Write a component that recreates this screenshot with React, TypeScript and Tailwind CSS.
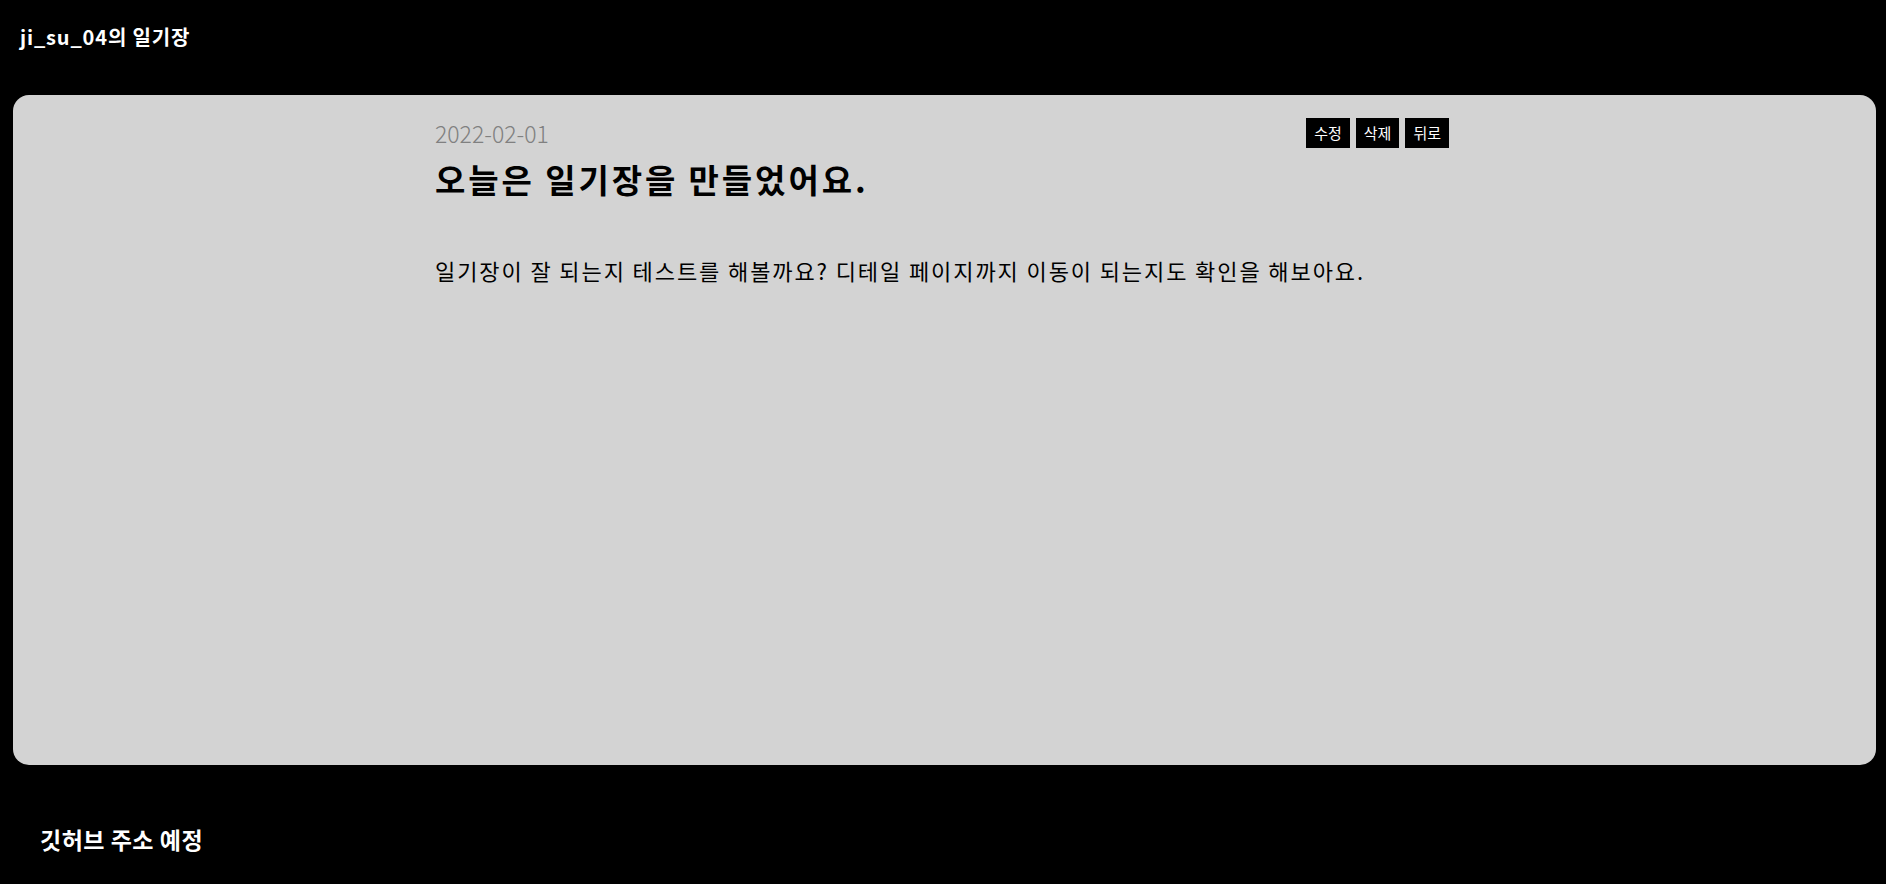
import React from "react";

export default function App() {
  const font = { fontFamily: '"Noto Sans CJK KR", "Noto Sans", sans-serif' };
  return (
    <div className="min-h-[884px] w-full bg-black text-white" style={font}>
      <header className="h-[95px] pl-[20px] pt-[22px]">
        <h1 className="text-[20px] font-bold leading-[30px] tracking-[0.85px]">ji_su_04의 일기장</h1>
      </header>
      <main className="ml-[13px] mr-[10px] h-[670px] rounded-[16px] bg-[#d3d3d3] pr-[5px] text-black">
        <div className="mx-auto w-[1014px] pt-[23px]">
          <div className="flex items-center justify-between">
            <span className="text-[23px] font-light leading-[30px] text-[#808080]">2022-02-01</span>
            <div className="flex gap-[6px]">
              <button className="h-[30px] bg-black px-[8px] text-[15px] leading-[30px] text-white">수정</button>
              <button className="h-[30px] bg-black px-[8px] text-[15px] leading-[30px] text-white">삭제</button>
              <button className="h-[30px] bg-black px-[8px] text-[15px] leading-[30px] text-white">뒤로</button>
            </div>
          </div>
          <h2 className="mt-[9px] text-[33px] font-bold leading-[44px] tracking-[2.9px]">오늘은 일기장을 만들었어요.</h2>
          <p className="mt-[54px] text-[22px] leading-[30px] tracking-[1.9px]">
            일기장이 잘 되는지 테스트를 해볼까요? 디테일 페이지까지 이동이 되는지도 확인을 해보아요.
          </p>
        </div>
      </main>
      <footer className="h-[119px] pl-[40px] pt-[58px]">
        <p className="text-[23px] font-bold leading-[32px] tracking-[0.5px]">깃허브 주소 예정</p>
      </footer>
    </div>
  );
}
